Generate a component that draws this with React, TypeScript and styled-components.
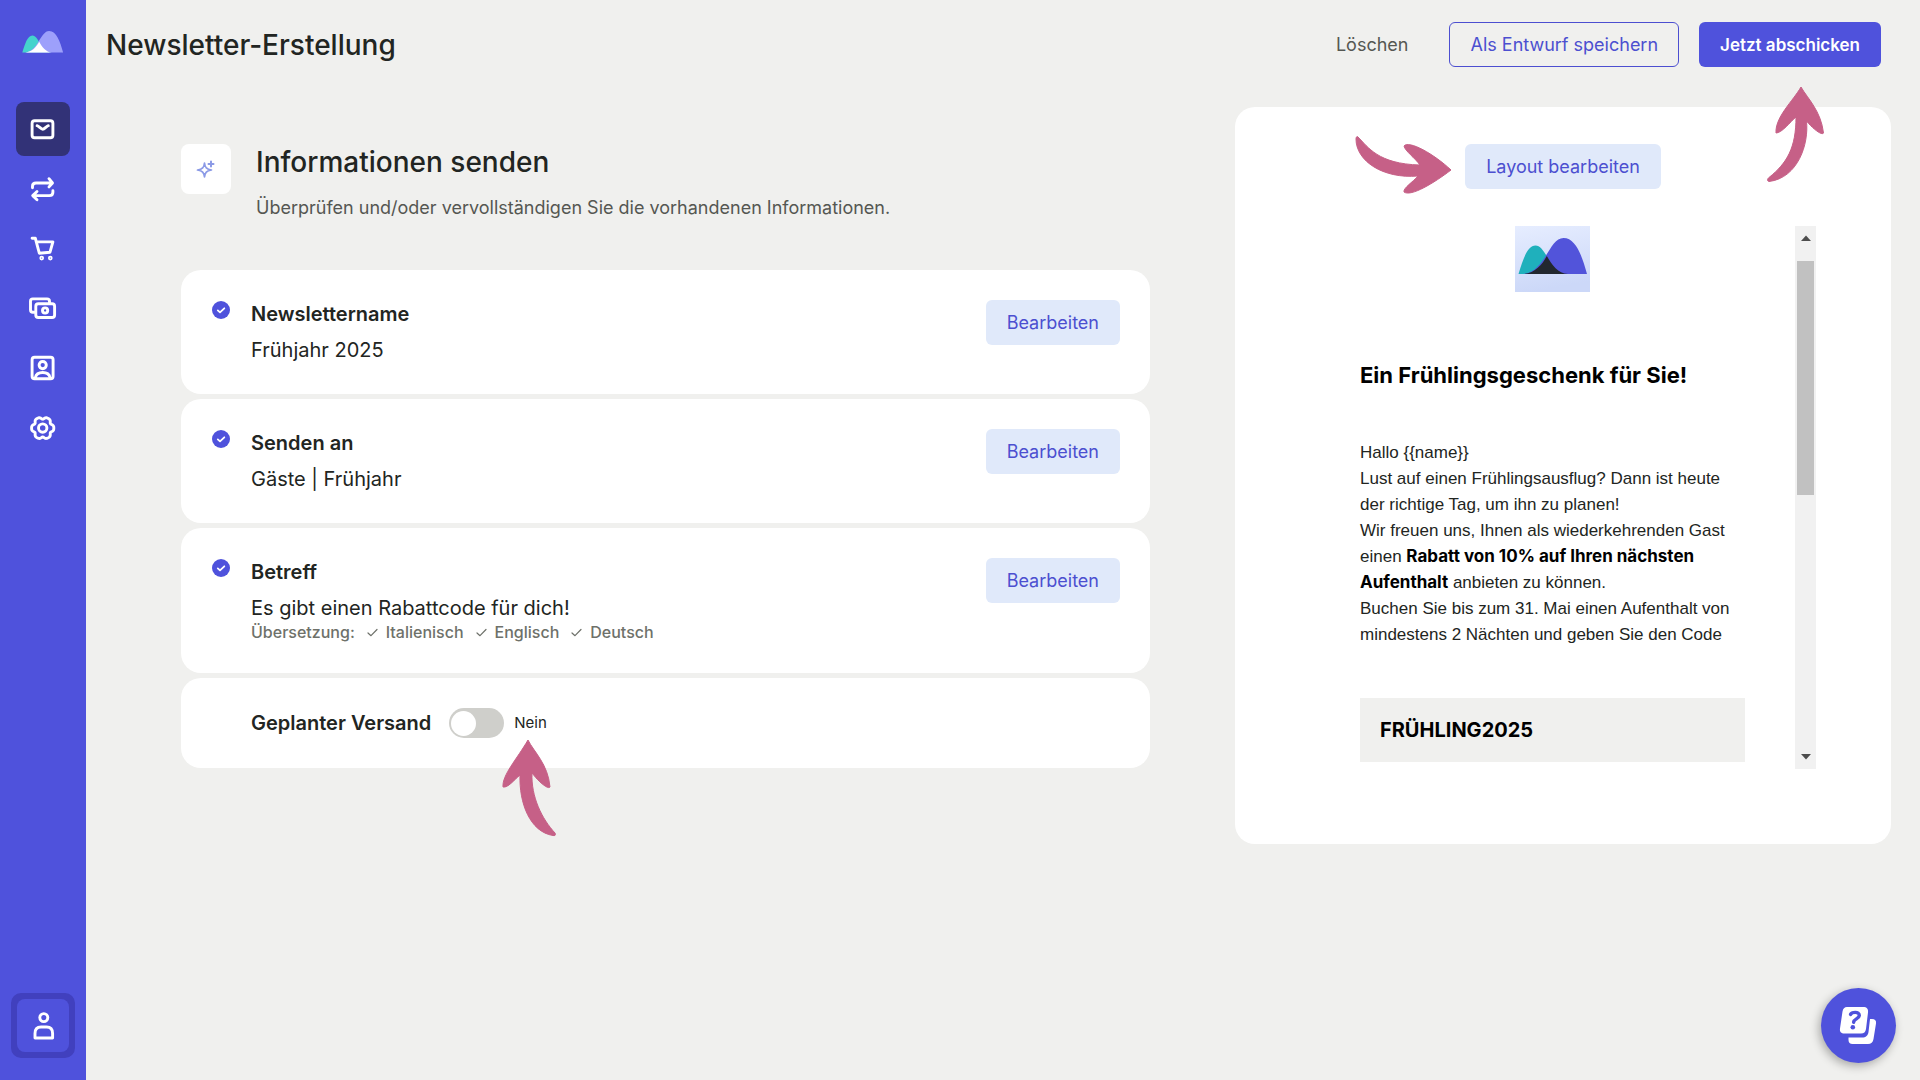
import React, { useState } from "react";
import styled, { createGlobalStyle, css } from "styled-components";

const color = {
  page: "#f0f0ee",
  primary: "#4f52dc",
  primaryText: "#4c4fd0",
  primaryDark: "#4140be",
  active: "#323277",
  soft: "#e0e9fa",
  text: "#222522",
  muted: "#555752",
  pale: "#6e716a",
  arrow: "#c66087",
};

const GlobalStyle = createGlobalStyle`
  *, *::before, *::after { box-sizing: border-box; }
  body {
    margin: 0;
    background: ${color.page};
    color: ${color.text};
    font-family: Inter, "Liberation Sans", sans-serif;
  }
  h1, h2, h3, p { margin: 0; }
`;

const Shell = styled.div`
  display: flex;
  min-height: 100vh;
`;

/* ---------- Sidebar ---------- */

const Sidebar = styled.aside`
  flex: 0 0 86px;
  display: flex;
  flex-direction: column;
  align-items: center;
  padding: 30px 0 22px;
  background: ${color.primary};
`;

const LogoLink = styled.a`
  display: block;
  height: 24px;
  svg { display: block; }
`;

const Nav = styled.nav`
  display: flex;
  flex-direction: column;
  gap: 6px;
  margin-top: 48px;
`;

const NavItem = styled.a<{ $active?: boolean }>`
  display: grid;
  place-items: center;
  width: 54px;
  height: 54px;
  border-radius: 8px;
  background: ${(p) => (p.$active ? color.active : "transparent")};
`;

const UserButton = styled.button`
  display: grid;
  place-items: center;
  width: 64px;
  height: 65px;
  margin-top: auto;
  padding: 0;
  border: 6px solid ${color.primaryDark};
  border-radius: 10px;
  background: ${color.primaryDark};
  cursor: pointer;
`;

const UserTile = styled.span`
  display: grid;
  place-items: center;
  width: 100%;
  height: 100%;
  border-radius: 8px;
  background: ${color.primary};
`;

const IconSvg = styled.svg`
  display: block;
  width: 30px;
  height: 30px;
  fill: none;
  stroke: #fff;
  stroke-width: 2.9;
  stroke-linecap: round;
  stroke-linejoin: round;
`;

/* ---------- Page ---------- */

const Main = styled.main`
  flex: 1;
  min-width: 0;
`;

const TopBar = styled.header`
  display: flex;
  align-items: center;
  justify-content: space-between;
  padding: 22px 39px 40px 20px;
`;

const PageTitle = styled.h1`
  font-size: 28px;
  line-height: 36px;
  font-weight: 500;
`;

const Actions = styled.div`
  display: flex;
  gap: 20px;
`;

const Anchor = styled.div`
  position: relative;
`;

type Variant = "plain" | "outline" | "primary" | "soft";

const variants = {
  plain: css`
    background: transparent;
    color: ${color.muted};
  `,
  outline: css`
    background: transparent;
    border-color: ${color.primaryText};
    color: ${color.primaryText};
  `,
  primary: css`
    background: ${color.primary};
    color: #fff;
    font-size: 17px;
    font-weight: 600;
  `,
  soft: css`
    background: ${color.soft};
    color: ${color.primaryText};
  `,
};

const Button = styled.button<{ $variant: Variant }>`
  height: 45px;
  padding: 0 20px;
  border: 1px solid transparent;
  border-radius: 6px;
  font: 400 18px/24px Inter, "Liberation Sans", sans-serif;
  white-space: nowrap;
  cursor: pointer;
  ${(p) => variants[p.$variant]}
`;

const Columns = styled.div`
  display: grid;
  grid-template-columns: minmax(0, 1fr) minmax(480px, 656px);
  align-items: start;
  column-gap: 85px;
  padding: 0 29px 40px 95px;
`;

const Intro = styled.div`
  display: flex;
  gap: 25px;
  margin: 37px 0 50px;
`;

const IntroIcon = styled.div`
  display: grid;
  place-items: center;
  width: 50px;
  height: 50px;
  border-radius: 8px;
  background: #fff;
`;

const IntroTitle = styled.h2`
  font-size: 28px;
  line-height: 36px;
  font-weight: 500;
`;

const IntroText = styled.p`
  margin-top: 16px;
  font-size: 18px;
  line-height: 24px;
  color: ${color.muted};
`;

const CardList = styled.div`
  display: flex;
  flex-direction: column;
  gap: 5px;
`;

const Card = styled.section`
  display: grid;
  grid-template-columns: 20px minmax(0, 1fr) auto;
  column-gap: 20px;
  align-items: start;
  padding: 30px;
  border-radius: 20px;
  background: #fff;
`;

const CardTitle = styled.h3`
  font-size: 20px;
  line-height: 28px;
  font-weight: 600;
`;

const CardValue = styled.p`
  margin-top: 8px;
  font-size: 20px;
  line-height: 28px;
`;

const Translations = styled.div`
  display: flex;
  align-items: center;
  gap: 12px;
  font-size: 16px;
  line-height: 21px;
  font-weight: 500;
  color: ${color.pale};
`;

const Language = styled.span`
  display: flex;
  align-items: center;
  gap: 8px;
`;

const Schedule = styled.div`
  grid-column: 2 / -1;
  display: flex;
  align-items: center;
  height: 30px;
`;

const ScheduleLabel = styled.label`
  margin-right: 18px;
  font-size: 20px;
  line-height: 28px;
  font-weight: 600;
`;

const Switch = styled.input`
  appearance: none;
  display: flex;
  align-items: center;
  width: 55px;
  height: 30px;
  margin: 0 10px 0 0;
  padding: 0 2px;
  border-radius: 15px;
  background: #cfcfcb;
  cursor: pointer;

  &::before {
    content: "";
    width: 25px;
    height: 25px;
    border-radius: 50%;
    background: #fff;
  }

  &:checked {
    justify-content: flex-end;
    background: ${color.primary};
  }
`;

const SwitchState = styled.span`
  display: block;
  font-size: 15px;
  line-height: 24px;
`;

/* ---------- Preview ---------- */

const Preview = styled.section`
  display: flex;
  flex-direction: column;
  align-items: center;
  padding: 37px 75px 75px;
  border-radius: 20px;
  background: #fff;
`;

const Frame = styled.div`
  display: flex;
  width: 100%;
  margin-top: 37px;
`;

const Mail = styled.article`
  flex: 1;
  display: flex;
  flex-direction: column;
  padding: 0 50px 7px;
  font-family: "Liberation Sans", Arial, sans-serif;
  svg { align-self: center; display: block; }
`;

const MailTitle = styled.h2`
  margin: 69px 0 51px;
  font: 700 22px/28px Inter, "Liberation Sans", sans-serif;
  color: #000;
`;

const MailText = styled.p`
  font-size: 17px;
  line-height: 26px;

  strong {
    font-family: Inter, "Liberation Sans", sans-serif;
    font-weight: 700;
    line-height: 20px;
    color: #000;
  }
`;

const CodeBox = styled.p`
  margin-top: 50px;
  padding: 18px 20px;
  background: ${color.page};
  color: #000;
  font: 700 20px/28px Inter, "Liberation Sans", sans-serif;
`;

const Scrollbar = styled.div`
  display: flex;
  flex-direction: column;
  align-items: center;
  flex: 0 0 21px;
  padding: 8px 0;
  background: #f1f1f1;
  svg { display: block; fill: #4d4d4d; }
`;

const Thumb = styled.div`
  width: 17px;
  height: 234px;
  margin: 19px 0 auto;
  background: #c1c1c1;
`;

/* ---------- Overlays ---------- */

const Pointer = styled.svg<{ $top: string; $left: string }>`
  position: absolute;
  z-index: 1;
  top: ${(p) => p.$top};
  left: ${(p) => p.$left};
  fill: ${color.arrow};
  stroke: ${color.arrow};
  stroke-width: 1;
  stroke-linejoin: round;
  pointer-events: none;
`;

const HelpButton = styled.button`
  position: fixed;
  right: 24px;
  bottom: 17px;
  display: grid;
  place-items: center;
  width: 75px;
  height: 75px;
  padding: 0;
  border: 0;
  border-radius: 50%;
  background: ${color.primary};
  box-shadow: -2px 3px 10px rgba(0, 0, 0, 0.3);
  cursor: pointer;
`;

/* Six-lobed outline of the settings gear */
const gearPath =
  Array.from({ length: 120 }, (_, i) => {
    const t = (i / 120) * Math.PI * 2;
    const r = 10.3 + 1.1 * Math.cos(6 * t) - 0.3 * Math.cos(12 * t);
    const x = 15.2 + r * Math.cos(t);
    const y = 14.4 + r * Math.sin(t);
    return `${i ? "L" : "M"}${x.toFixed(2)} ${y.toFixed(2)}`;
  }).join("") + "Z";

const Peaks = (p: { left: string; right: string; front: string }) => (
  <>
    <path fill={p.left} d="M3.5 48C8 34 12 19.5 20.5 19.5C31 19.5 35 47 53 48Z" />
    <path fill={p.right} d="M8.5 48C30 46 34 12 48.5 12C61 12 67 30 72 48Z" />
    <path fill={p.front} d="M8.5 48C20 47 27 39 31.8 30C37 39 43 47.5 53 48Z" />
  </>
);

const navItems = [
  {
    label: "Newsletter",
    icon: (
      <>
        <rect x="4.6" y="7" width="20.8" height="17" rx="2.5" />
        <path d="M9.6 12C11.5 12.4 13.3 15.5 15.2 15.5S19 12.4 20.8 12" />
      </>
    ),
  },
  {
    label: "Automationen",
    icon: (
      <>
        <path d="M5 14V12.5C5 10.3 6.3 9.3 8.5 9.3H24.8M21.5 5L25 9.3L21.5 13.2" />
        <path d="M25.4 17V18.5C25.4 20.7 24 21.9 21.8 21.9H5.4M9.5 17.8L5.2 21.9L9.5 26" />
      </>
    ),
  },
  {
    label: "Warenkorb",
    icon: (
      <>
        <path d="M4.6 4.5H7.8L11.8 19.5L22.5 18.5L25.4 8.2H9.2" />
        <circle cx="14.2" cy="24.4" r="0.9" />
        <circle cx="22.8" cy="24.4" r="0.9" />
      </>
    ),
  },
  {
    label: "Zahlungen",
    icon: (
      <>
        <path d="M7 18.5H5.3C3.8 18.5 3 17.4 3 16V7.5C3 6.1 3.8 5.2 5.3 5.2H19.5C21 5.2 22 6.1 22 7.5V9" />
        <rect x="8.3" y="10" width="18.8" height="13.8" rx="2.5" />
        <circle cx="17.6" cy="16.8" r="2.6" />
      </>
    ),
  },
  {
    label: "Kontakte",
    icon: (
      <>
        <rect x="4.6" y="3.6" width="21" height="21.4" rx="2.5" />
        <circle cx="15.2" cy="11.4" r="3.6" />
        <path d="M7.8 24C8.6 20.4 11.6 18.8 15.2 18.8S21.8 20.4 22.6 24" />
      </>
    ),
  },
  {
    label: "Einstellungen",
    icon: (
      <>
        <path d={gearPath} />
        <circle cx="15.2" cy="14.4" r="4.2" />
      </>
    ),
  },
];

const CheckBadge = () => (
  <svg width="20" height="20" viewBox="0 0 20 20" fill="none" role="img" aria-label="Erledigt">
    <circle cx="10" cy="10" r="9" fill={color.primary} />
    <path d="M6.8 10.4L9 12.4L13.3 8.3" stroke="#fff" strokeWidth="1.8" strokeLinecap="round" strokeLinejoin="round" />
  </svg>
);

const Tick = () => (
  <svg width="11" height="11" viewBox="0 0 11 11" fill="none" aria-hidden="true">
    <path d="M1 6L4 8.7L10 2.5" stroke={color.pale} strokeWidth="1.2" strokeLinecap="round" strokeLinejoin="round" />
  </svg>
);

const settings = [
  { title: "Newslettername", value: "Frühjahr 2025", languages: [] },
  { title: "Senden an", value: "Gäste | Frühjahr", languages: [] },
  {
    title: "Betreff",
    value: "Es gibt einen Rabattcode für dich!",
    languages: ["Italienisch", "Englisch", "Deutsch"],
  },
];

export default function App() {
  const [scheduled, setScheduled] = useState(false);

  return (
    <>
      <GlobalStyle />
      <Shell>
        <Sidebar>
          <LogoLink href="#" aria-label="Startseite">
            <svg width="42" height="24" viewBox="3 11 70.5 39">
              <Peaks left="#45d3cd" right="#9da0fb" front="#fff" />
            </svg>
          </LogoLink>
          <Nav>
            {navItems.map((item, i) => (
              <NavItem key={item.label} href="#" aria-label={item.label} $active={i === 0}>
                <IconSvg viewBox="0.5 0.3 30 30">{item.icon}</IconSvg>
              </NavItem>
            ))}
          </Nav>
          <UserButton aria-label="Konto">
            <UserTile>
              <IconSvg viewBox="0 0 30 30">
                <circle cx="15.8" cy="6.6" r="4" />
                <path d="M7 27V22.5C7 18.2 9 16 13 16H18.6C22.6 16 24.6 18.2 24.6 22.5V27Z" />
              </IconSvg>
            </UserTile>
          </UserButton>
        </Sidebar>

        <Main>
          <TopBar>
            <PageTitle>Newsletter-Erstellung</PageTitle>
            <Actions>
              <Button $variant="plain">Löschen</Button>
              <Button $variant="outline">Als Entwurf speichern</Button>
              <Anchor>
                <Button $variant="primary">Jetzt abschicken</Button>
                <Pointer $top="64px" $left="66px" width="60" height="98" viewBox="0 0 60 98">
                  <path d="M36 1C43 13 56 25 58.5 47C57 50 47 42 41.5 35C44 58 33 92 4 95.5C2 95 2 93 4 91.5C22 77 31 62 31 31C25 36 17 47 11 47C10 31 28 15 36 1Z" />
                </Pointer>
              </Anchor>
            </Actions>
          </TopBar>

          <Columns>
            <div>
              <Intro>
                <IntroIcon>
                  <svg width="20" height="20" viewBox="0 0 20 20" fill="none" stroke="#8b9ae6" strokeWidth="1.7" strokeLinejoin="round" strokeLinecap="round" aria-hidden="true">
                    <path d="M8.5 4C9 8.5 10.5 10.3 15.5 11C10.5 11.7 9 13.5 8.5 18C8 13.5 6.5 11.7 1.5 11C6.5 10.3 8 8.5 8.5 4Z" />
                    <path d="M15 2.5V7.5M12.5 5H17.5" strokeWidth="2" />
                  </svg>
                </IntroIcon>
                <div>
                  <IntroTitle>Informationen senden</IntroTitle>
                  <IntroText>Überprüfen und/oder vervollständigen Sie die vorhandenen Informationen.</IntroText>
                </div>
              </Intro>

              <CardList>
                {settings.map((s) => (
                  <Card key={s.title}>
                    <CheckBadge />
                    <div>
                      <CardTitle>{s.title}</CardTitle>
                      <CardValue>{s.value}</CardValue>
                      {s.languages.length > 0 && (
                        <Translations>
                          <span>Übersetzung:</span>
                          {s.languages.map((l) => (
                            <Language key={l}>
                              <Tick />
                              {l}
                            </Language>
                          ))}
                        </Translations>
                      )}
                    </div>
                    <Button $variant="soft">Bearbeiten</Button>
                  </Card>
                ))}
                <Card>
                  <Schedule>
                    <ScheduleLabel htmlFor="schedule">Geplanter Versand</ScheduleLabel>
                    <Switch
                      id="schedule"
                      type="checkbox"
                      role="switch"
                      checked={scheduled}
                      onChange={(e) => setScheduled(e.target.checked)}
                    />
                    <Anchor>
                      <SwitchState>{scheduled ? "Ja" : "Nein"}</SwitchState>
                      <Pointer $top="28px" $left="-14px" width="60" height="100" viewBox="0 0 60 100">
                        <path d="M28 1C34 13 48 25 50 48C48 51 38 42 32 34C31 58 42 80 55 94C56 96 55 97 53 96.5C30 93 19 64 20 36C14 41 8 49 3 48C2 36 17 20 28 1Z" />
                      </Pointer>
                    </Anchor>
                  </Schedule>
                </Card>
              </CardList>
            </div>

            <Preview>
              <Anchor>
                <Button $variant="soft">Layout bearbeiten</Button>
                <Pointer $top="-9px" $left="-111px" width="100" height="60" viewBox="0 0 100 60">
                  <path d="M4 2C14 12 24 29 66 30C61 23 51 16 50 11C55 5 80 19 97 35C80 48 57 62 50 57C49 53 59 47 64 41C29 44 2 26 2 4C2 2 3 1 4 2Z" />
                </Pointer>
              </Anchor>
              <Frame>
                <Mail>
                  <svg width="75" height="66" viewBox="0 0 75 66" role="img" aria-label="Logo">
                    <defs>
                      <linearGradient id="sky" x1="0" y1="0" x2="0.2" y2="1">
                        <stop offset="0" stopColor="#e6edff" />
                        <stop offset="1" stopColor="#ccd8f8" />
                      </linearGradient>
                    </defs>
                    <rect width="75" height="66" fill="url(#sky)" />
                    <Peaks left="#1fb0bc" right="#5254da" front="#22272f" />
                  </svg>
                  <MailTitle>Ein Frühlingsgeschenk für Sie!</MailTitle>
                  <MailText>
                    {"Hallo {{name}}"}
                    <br />
                    Lust auf einen Frühlingsausflug? Dann ist heute der richtige Tag, um ihn zu planen!
                    <br />
                    Wir freuen uns, Ihnen als wiederkehrenden Gast einen{" "}
                    <strong>Rabatt von 10% auf Ihren nächsten</strong> <strong>Aufenthalt</strong> anbieten zu
                    können.
                    <br />
                    Buchen Sie bis zum 31. Mai einen Aufenthalt von mindestens 2 Nächten und geben Sie den Code
                  </MailText>
                  <CodeBox>FRÜHLING2025</CodeBox>
                </Mail>
                <Scrollbar aria-hidden="true">
                  <svg width="10" height="8" viewBox="0 0 10 8"><path d="M0 7L5 1.5L10 7Z" /></svg>
                  <Thumb />
                  <svg width="10" height="8" viewBox="0 0 10 8"><path d="M0 1L5 6.5L10 1Z" /></svg>
                </Scrollbar>
              </Frame>
            </Preview>
          </Columns>
        </Main>
      </Shell>

      <HelpButton aria-label="Hilfe">
        <svg width="39" height="39" viewBox="0 0 39 39" aria-hidden="true">
          <path fill="#fff" d="M31 13H33C36 13 37.5 14.5 37 17.5L34.5 33C34 36.5 32 38 29 38H13.5C11 38 9.5 36.5 9.5 34V31.5H23C27 31.5 29 29.5 29.5 26Z" />
          <path fill="#fff" d="M8 1H24C28 1 29.5 3 29 6.5L27 23C26.5 26 25 27.5 22 27.5H5.5C2 27.5 0.5 26 1 22.5L3.5 5.5C4 2.5 5.5 1 8 1Z" />
          <path fill="none" stroke={color.primary} strokeWidth="3.4" strokeLinecap="round" d="M11.5 8.5C12.5 6 20.5 5 20.3 9.5C20 13 15 12.8 14.6 16.2" />
          <circle cx="13.8" cy="21.2" r="2.3" fill={color.primary} />
        </svg>
      </HelpButton>
    </>
  );
}
